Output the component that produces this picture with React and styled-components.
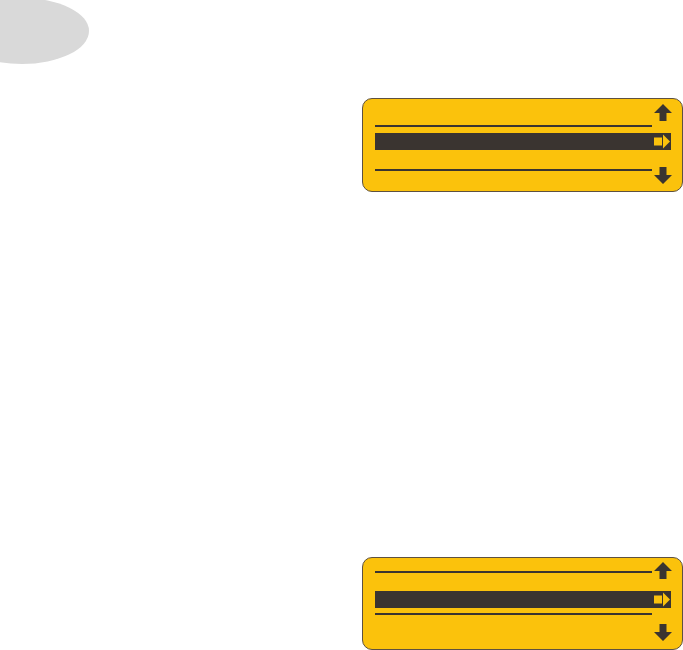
import React from 'react';
import styled, { createGlobalStyle } from 'styled-components';

const YELLOW = '#fbc20c';
const DARK = '#3a3430';

const GlobalStyle = createGlobalStyle`
  html, body {
    margin: 0;
    padding: 0;
    background: #ffffff;
    font-family: 'Liberation Sans', Arial, sans-serif;
  }
`;

const Page = styled.div`
  width: 683px;
  height: 650px;
  overflow: hidden;
  display: flex;
  flex-direction: column;
`;

const PageTab = styled.div`
  width: 134px;
  height: 66px;
  margin: -2px 0 0 -45px;
  border-radius: 50%;
  background: #d9d9d9;
  flex-shrink: 0;
`;

const Column = styled.div`
  display: flex;
  flex-direction: column;
  padding-left: 362px;
`;

/* the yellow LCD style display */
const Display = styled.div`
  box-sizing: border-box;
  width: 321px;
  height: ${(p) => p.h}px;
  margin-top: ${(p) => p.top}px;
  padding: 0 10px 0 12px;
  display: flex;
  flex-direction: column;
  background: ${YELLOW};
  border: 1px solid #5e5140;
  border-radius: 10px;
  flex-shrink: 0;
`;

const Row = styled.div`
  display: flex;
  height: ${(p) => p.h}px;
  margin-top: ${(p) => p.top || 0}px;
`;

const Rule = styled.div`
  flex: 1;
  height: 2px;
  margin-top: ${(p) => p.top || 0}px;
  background: ${DARK};
`;

const ArrowSlot = styled.div`
  width: 18px;
  margin-left: 2px;
  display: flex;
  align-self: ${(p) => p.align || 'flex-start'};
  line-height: 0;
`;

const Bar = styled.div`
  height: 17px;
  margin-top: ${(p) => p.top}px;
  margin-right: 1px;
  padding-right: 1px;
  display: flex;
  justify-content: flex-end;
  align-items: center;
  background: ${DARK};
`;

const UpArrow = () => (
  <svg width="18" height="17" viewBox="0 0 18 17">
    <path d="M0 9 L9 0 L18 9 L12.5 9 L12.5 17 L5.5 17 L5.5 9 Z" fill={DARK} />
  </svg>
);

const DownArrow = () => (
  <svg width="18" height="17" viewBox="0 0 18 17">
    <path d="M0 8 L9 17 L18 8 L12.5 8 L12.5 0 L5.5 0 L5.5 8 Z" fill={DARK} />
  </svg>
);

const RightArrow = () => (
  <svg width="16" height="15" viewBox="0 0 16 15">
    <rect x="0" y="3.5" width="8" height="8" fill={YELLOW} />
    <path d="M9 0.5 L16 7.5 L9 14.5 Z" fill={YELLOW} />
  </svg>
);

const App = () => (
  <Page>
    <GlobalStyle />
    <PageTab />
    <Column>
      <Display h={94} top={34}>
        <Row h={23} top={5}>
          <Rule top={21} />
          <ArrowSlot>
            <UpArrow />
          </ArrowSlot>
        </Row>
        <Bar top={6}>
          <RightArrow />
        </Bar>
        <Row h={17} top={17}>
          <Rule top={2} />
          <ArrowSlot>
            <DownArrow />
          </ArrowSlot>
        </Row>
      </Display>

      <Display h={93} top={365}>
        <Row h={16} top={4}>
          <Rule top={9} />
          <ArrowSlot>
            <UpArrow />
          </ArrowSlot>
        </Row>
        <Bar top={13}>
          <RightArrow />
        </Bar>
        <Row h={33}>
          <Rule top={5} />
          <ArrowSlot align="flex-end">
            <DownArrow />
          </ArrowSlot>
        </Row>
      </Display>
    </Column>
  </Page>
);

export default App;
